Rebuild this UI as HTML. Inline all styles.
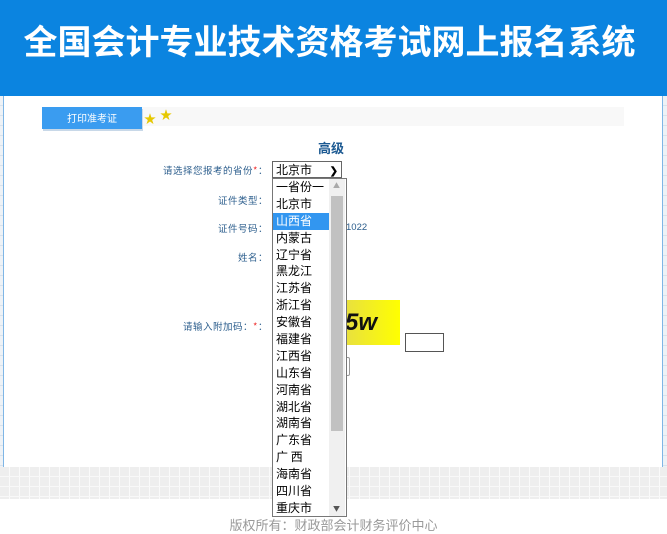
<!DOCTYPE html>
<html><head><meta charset="utf-8"><style>
*{margin:0;padding:0;box-sizing:border-box}
body{width:667px;height:526px;overflow:hidden;background:#fff;position:relative;font-family:"Liberation Sans","Noto Sans CJK SC",sans-serif}
.hdr{position:absolute;left:0;top:0;width:667px;height:96px;background:#0b84e0}
.hdr h1{position:absolute;left:-4px;width:667px;top:20px;text-align:center;color:#fff;font-size:34px;font-weight:bold;letter-spacing:0;font-family:"Noto Sans CJK SC",sans-serif;line-height:40px}
.side{position:absolute;top:96px;height:371px;width:4px;background:repeating-linear-gradient(#eef2f6 0 9px,#d8e2ec 9px 10px)}
.bl{position:absolute;top:96px;height:371px;width:1px;background:#7fb6e6}
.grid{position:absolute;left:0;top:467px;width:667px;height:32px;background:
 repeating-linear-gradient(90deg,#eee 0 9px,#fafafa 9px 10px),#eee}
.grid::after{content:"";position:absolute;inset:0;background:repeating-linear-gradient(#0000 0 9px,#f8f8f8 9px 10px)}
.btn{position:absolute;left:42px;top:107px;width:100px;height:22px;background:#3a9cf0;color:#fff;font-size:10px;text-align:center;line-height:22px;box-shadow:1px 2px 0 #c8d8e8;font-family:"Noto Sans CJK SC",sans-serif}
.dots{position:absolute;left:142px;top:107px;width:482px;height:19px;background-image:radial-gradient(#e2e2e2 0.5px,transparent 0.6px);background-size:2px 2px}
.lab{position:absolute;font-size:9.5px;color:#2b5d8c;text-align:right;width:130px;letter-spacing:0.5px;font-family:"Noto Sans CJK SC",sans-serif}
.lab b{color:#e33;font-weight:normal}
.title{position:absolute;left:318px;top:138px;font-size:13px;font-weight:bold;color:#1d5a92;font-family:"Noto Sans CJK SC",sans-serif}
.sel{position:absolute;left:272px;top:161px;width:70px;height:17px;border:1px solid #666;font-size:12px;line-height:15px;padding-left:3px;background:#fff;font-family:"Noto Sans CJK SC",sans-serif}
.list{position:absolute;left:272px;top:178px;width:75px;height:339px;border:1px solid #777;background:#fff;font-family:"Noto Sans CJK SC",sans-serif;font-size:12px}
.list .it{height:16.9px;line-height:16.9px;padding-left:3px;width:56px;color:#000}
.list .on{background:#3296f0;color:#fff}
.sb{position:absolute;right:1px;top:0;width:16px;height:337px;background:#f0f0f0}
.th{position:absolute;left:2px;top:17px;width:12px;height:235px;background:#c1c1c1}
</style></head><body>
<div class="hdr"><h1>全国会计专业技术资格考试网上报名系统</h1></div>
<div class="side" style="left:0"></div><div class="bl" style="left:3px"></div>
<div class="side" style="left:663px"></div><div class="bl" style="left:662px"></div>
<div class="grid"></div>
<div class="btn">打印准考证</div>
<div class="dots"></div>
<div style="position:absolute;left:144px;top:110px;color:#e6c800;font-size:12px">★</div>
<div style="position:absolute;left:160px;top:106px;color:#e6c800;font-size:12px">★</div>
<div class="title">高级</div>
<div class="lab" style="left:118px;top:163px;width:150px">请选择您报考的省份<b>*</b>：</div>
<div class="lab" style="left:138px;top:193px">证件类型：</div>
<div class="lab" style="left:138px;top:221px">证件号码：</div>
<div class="lab" style="left:138px;top:250px">姓名：</div>
<div class="lab" style="left:138px;top:319px">请输入附加码：<b>*</b>：</div>
<div style="position:absolute;left:346px;top:222px;font-size:9.5px;color:#2b5d8c">1022</div>
<div style="position:absolute;left:345px;top:300px;width:55px;height:45px;background:linear-gradient(90deg,#e8e040,#ffff00);font-size:24px;font-weight:bold;font-style:italic;line-height:45px;color:#111">5w</div>
<div style="position:absolute;left:405px;top:333px;width:39px;height:19px;border:1px solid #555"></div>
<div style="position:absolute;left:340px;top:357px;width:10px;height:19px;border:1px solid #999;border-radius:2px"></div>
<div class="sel">北京市<span style="position:absolute;right:3px;top:0;font-size:10px;font-weight:bold">&#10095;</span></div>
<div class="list">
<div class="it">一省份一</div><div class="it">北京市</div><div class="it on">山西省</div><div class="it">内蒙古</div><div class="it">辽宁省</div><div class="it">黑龙江</div><div class="it">江苏省</div><div class="it">浙江省</div><div class="it">安徽省</div><div class="it">福建省</div><div class="it">江西省</div><div class="it">山东省</div><div class="it">河南省</div><div class="it">湖北省</div><div class="it">湖南省</div><div class="it">广东省</div><div class="it">广 西</div><div class="it">海南省</div><div class="it">四川省</div><div class="it">重庆市</div>
<div class="sb"><div class="th"></div><div style="position:absolute;left:4px;top:3px;font-size:7px;color:#aaa;line-height:8px">▲</div><div style="position:absolute;left:4px;bottom:3px;font-size:7px;color:#555;line-height:8px">▼</div></div>
</div>
<div style="position:absolute;left:0;width:667px;top:515px;text-align:center;font-size:13px;color:#999;font-family:'Noto Sans CJK SC',sans-serif">版权所有：财政部会计财务评价中心</div>
</body></html>
